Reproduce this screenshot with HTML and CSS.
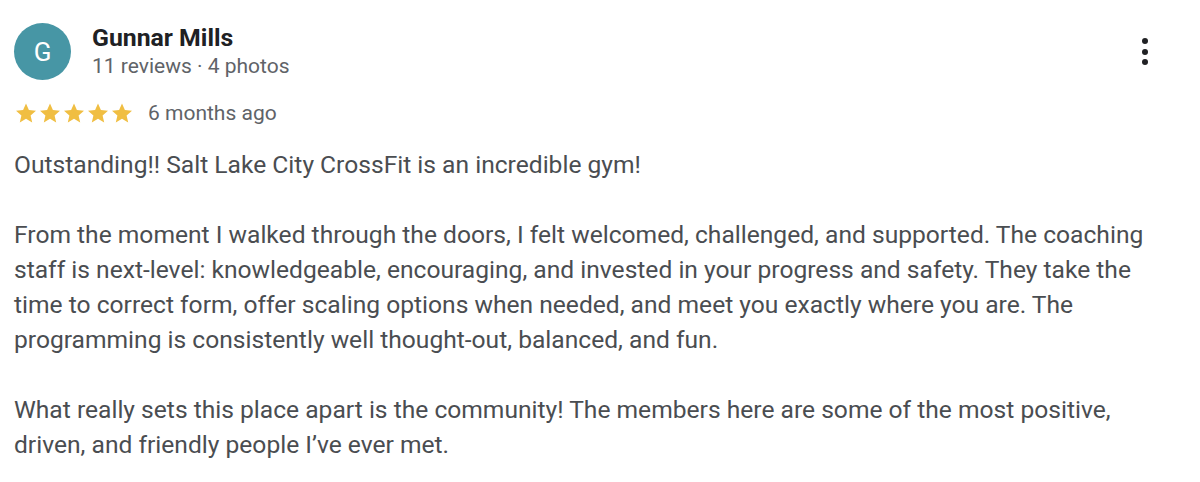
FILE: index.html
```html
<!DOCTYPE html>
<html>
<head>
<meta charset="utf-8">
<link rel="stylesheet" href="styles.css">
</head>
<body>
<div class="review">
  <div class="header">
    <div class="avatar">G</div>
    <div class="who">
      <div class="name">Gunnar Mills</div>
      <div class="meta">11 reviews · 4 photos</div>
    </div>
    <div class="more" aria-label="More">
      <span></span><span></span><span></span>
    </div>
  </div>
  <div class="rating">
    <div class="stars">
      <svg viewBox="0 0 24 24" class="star"><path d="M12 2.5l2.9 6.6 7.1.6-5.4 4.7 1.6 7-6.2-3.7-6.2 3.7 1.6-7L2 9.7l7.1-.6z"/></svg>
      <svg viewBox="0 0 24 24" class="star"><path d="M12 2.5l2.9 6.6 7.1.6-5.4 4.7 1.6 7-6.2-3.7-6.2 3.7 1.6-7L2 9.7l7.1-.6z"/></svg>
      <svg viewBox="0 0 24 24" class="star"><path d="M12 2.5l2.9 6.6 7.1.6-5.4 4.7 1.6 7-6.2-3.7-6.2 3.7 1.6-7L2 9.7l7.1-.6z"/></svg>
      <svg viewBox="0 0 24 24" class="star"><path d="M12 2.5l2.9 6.6 7.1.6-5.4 4.7 1.6 7-6.2-3.7-6.2 3.7 1.6-7L2 9.7l7.1-.6z"/></svg>
      <svg viewBox="0 0 24 24" class="star"><path d="M12 2.5l2.9 6.6 7.1.6-5.4 4.7 1.6 7-6.2-3.7-6.2 3.7 1.6-7L2 9.7l7.1-.6z"/></svg>
    </div>
    <span class="date">6 months ago</span>
  </div>
  <div class="body">
    <p>Outstanding!! Salt Lake City CrossFit is an incredible gym!</p>
    <p>From the moment I walked through the doors, I felt welcomed, challenged, and supported. The coaching staff is next-level: knowledgeable, encouraging, and invested in your progress and safety. They take the time to correct form, offer scaling options when needed, and meet you exactly where you are. The programming is consistently well thought-out, balanced, and fun.</p>
    <p>What really sets this place apart is the community! The members here are some of the most positive, driven, and friendly people I’ve ever met.</p>
  </div>
</div>
</body>
</html>
```
FILE: styles.css
```css
* { box-sizing: border-box; }
html, body { margin: 0; padding: 0; background: #fff; }
body { font-family: Roboto, "Noto Sans", Arial, sans-serif; color: #4a4d51; }
.review { padding: 25px 0 0 14px; width: 1180px; }
.header { display: flex; align-items: flex-start; }
.avatar {
  width: 57px; height: 57px; border-radius: 50%;
  background: #4796a5; color: #fff;
  display: flex; align-items: center; justify-content: center;
  font-size: 26px; flex: none;
  margin-top: -2px;
}
.who { margin-left: 21px; flex: 1; }
.name { font-size: 24.8px; font-weight: 700; color: #202124; line-height: 29px; margin-top: -2px; }
.meta { font-size: 21px; color: #606368; line-height: 27px; margin-top: 1px; }
.more { display: flex; flex-direction: column; gap: 4.5px; padding-top: 13px; margin-right: 32px; }
.more span { width: 6px; height: 6px; border-radius: 50%; background: #202124; display: block; }
.rating { display: flex; align-items: center; margin-top: 20px; height: 26px; }
.stars { display: flex; gap: 0; }
.star { width: 24px; height: 24px; fill: #f0be42; }
.date { margin-left: 14px; font-size: 21px; color: #606368; }
.body { margin-top: 21px; font-size: 24.6px; line-height: 35px; max-width: 1150px; }
.body p { margin: 0 0 35px 0; }
```
